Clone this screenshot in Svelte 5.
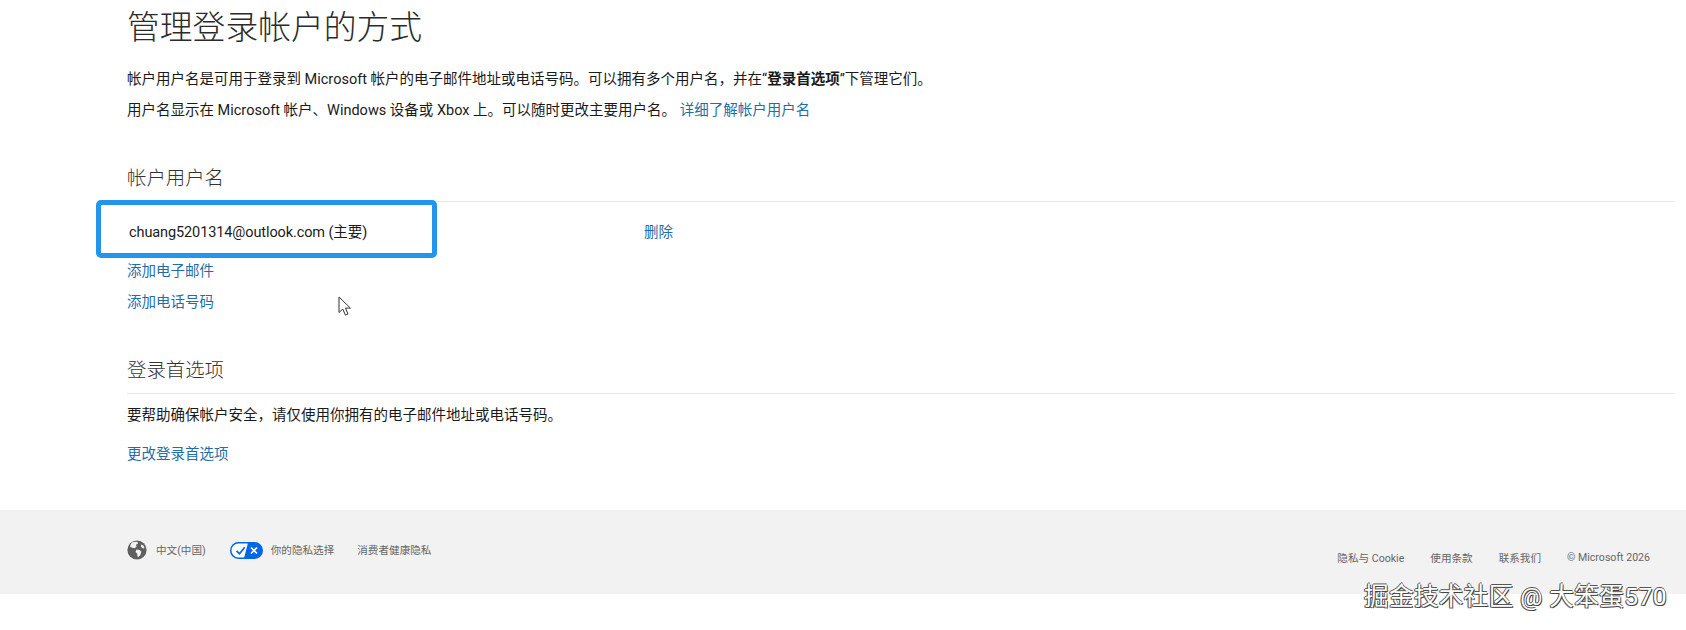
<script>
  const footLeft = ['你的隐私选择', '消费者健康隐私'];
  const footRight = ['隐私与 Cookie', '使用条款', '联系我们', '© Microsoft 2026'];
</script>

<div class="page">
  <main>
    <h1>管理登录帐户的方式</h1>
    <p class="l1">帐户用户名是可用于登录到 Microsoft 帐户的电子邮件地址或电话号码。可以拥有多个用户名，并在“<b>登录首选项</b>”下管理它们。</p>
    <p class="l2">用户名显示在 Microsoft 帐户、Windows 设备或 Xbox 上。可以随时更改主要用户名。 <a href="#a">详细了解帐户用户名</a></p>

    <h2 class="s1">帐户用户名</h2>
    <div class="row">
      <span class="email">chuang5201314@outlook.com (主要)</span>
      <a href="#a">删除</a>
      <div class="highlight"></div>
    </div>
    <div class="links">
      <a href="#a">添加电子邮件</a>
      <a href="#a">添加电话号码</a>
    </div>

    <h2 class="s2">登录首选项</h2>
    <p class="l3">要帮助确保帐户安全，请仅使用你拥有的电子邮件地址或电话号码。</p>
    <a href="#a" class="change">更改登录首选项</a>
  </main>

  <footer>
    <div class="fl">
      <svg class="globe" width="20" height="20" viewBox="0 0 20 20">
        <circle cx="10" cy="10" r="9.6" fill="#5f5f5f" />
        <path d="M5 2.6c2-.8 4-1 5.5-.6l.5 1.6-2 1.2.6 1.6-2 1.8-2.6-.4L3 6.4C3.4 5 4 3.6 5 2.6zM9.5 9.5l3.2.4 1.6 1.8-.8 3-2 2.4-1-.6-.4-3-1.6-1.6zM14 4.4l2.4 1 1.2 3-2-.2-1.6-1.4z" fill="#f2f2f2" />
      </svg>
      <span class="lang">中文(中国)</span>
      <svg class="toggle" width="33" height="17" viewBox="0 0 33 17">
        <rect x=".75" y=".75" width="31.5" height="15.5" rx="7.75" fill="#fff" stroke="#0067e6" stroke-width="1.5" />
        <path d="M18 .75h6.5a7.75 7.75 0 0 1 0 15.5H14z" fill="#0067e6" />
        <path d="M6.5 8.8l3 3 5.2-6.6" fill="none" stroke="#0067e6" stroke-width="1.7" />
        <path d="M21 5.5l6 6M27 5.5l-6 6" fill="none" stroke="#fff" stroke-width="1.7" />
      </svg>
      <span class="privacy">{footLeft[0]}</span>
      <span class="health">{footLeft[1]}</span>
    </div>
    <div class="fr">
      {#each footRight as t}<span>{t}</span>{/each}
    </div>
  </footer>

  <svg class="cursor" width="15" height="21" viewBox="0 0 15 21">
    <path d="M1 1v15.5l3.8-3.4 2.6 6 2.6-1.1-2.6-5.9h5z" fill="#fff" stroke="#333" stroke-width="1" stroke-linejoin="round" />
  </svg>
  <div class="mark">掘金技术社区 @ 大笨蛋570</div>
</div>

<style>
  :global(body) {
    margin: 0;
    background: #fff;
  }
  .page {
    position: relative;
    width: 1686px;
    height: 630px;
    overflow: hidden;
    font-family: Roboto, "Noto Sans CJK SC", sans-serif;
    color: #1a1a1a;
  }
  main {
    height: 510px;
    box-sizing: border-box;
    padding: 1px 12px 0 127px;
  }
  h1 {
    margin: 0;
    font-size: 32.8px;
    line-height: 55px;
    font-weight: 300;
    color: #2b2b2b;
  }
  h2 {
    margin: 0;
    font-size: 19.4px;
    line-height: 30px;
    font-weight: 300;
    color: #333;
    border-bottom: 1px solid #e6e6e6;
  }
  p {
    margin: 0;
    font-size: 14.5px;
    line-height: 22px;
    white-space: nowrap;
  }
  a {
    color: #1f6ea8;
    text-decoration: none;
    font-size: 14.5px;
    line-height: 22px;
  }
  .l1 { margin-top: 13px; }
  .l2 { margin-top: 9px; }
  .s1 {
    margin-top: 42px;
    padding-bottom: 7px;
  }
  .row {
    position: relative;
    height: 56px;
    box-sizing: border-box;
    padding-top: 6px;
    display: flex;
    align-items: center;
  }
  .email {
    width: 515px;
    padding-left: 2px;
    font-size: 14.5px;
    line-height: 22px;
    letter-spacing: -0.1px;
  }
  .highlight {
    position: absolute;
    left: -31px;
    top: -2px;
    width: 331px;
    height: 48px;
    border: 5px solid #2196ec;
    border-radius: 5px;
  }
  .links {
    display: flex;
    flex-direction: column;
    align-items: flex-start;
    gap: 9px;
    margin-top: 3px;
  }
  .s2 {
    margin-top: 42px;
    padding-bottom: 7px;
  }
  .l3 { margin-top: 11px; }
  .change {
    display: block;
    margin-top: 17px;
  }
  footer {
    height: 84px;
    box-sizing: border-box;
    background: #f2f2f2;
    padding: 30px 36px 0 127px;
    display: flex;
    justify-content: space-between;
    font-size: 10.6px;
    color: #666;
  }
  .fl {
    display: flex;
    align-items: center;
    height: 20px;
  }
  .fl span { margin-bottom: 2px; }
  .lang { margin-left: 9px; }
  .toggle { margin-left: 24px; }
  .privacy { margin-left: 8px; }
  .health { margin-left: 23px; }
  .fr {
    display: flex;
    gap: 26px;
    margin-top: 7px;
    height: 20px;
    align-items: center;
  }
  .cursor {
    position: absolute;
    left: 338px;
    top: 296px;
  }
  .mark {
    position: absolute;
    right: 19px;
    top: 582px;
    font-size: 24.6px;
    line-height: 30px;
    color: #fff;
    letter-spacing: 0.4px;
    text-shadow: -1px 0 #555, 0 -1px #555, 1px 1px #444, -1px 1px #777;
    white-space: nowrap;
  }
</style>
